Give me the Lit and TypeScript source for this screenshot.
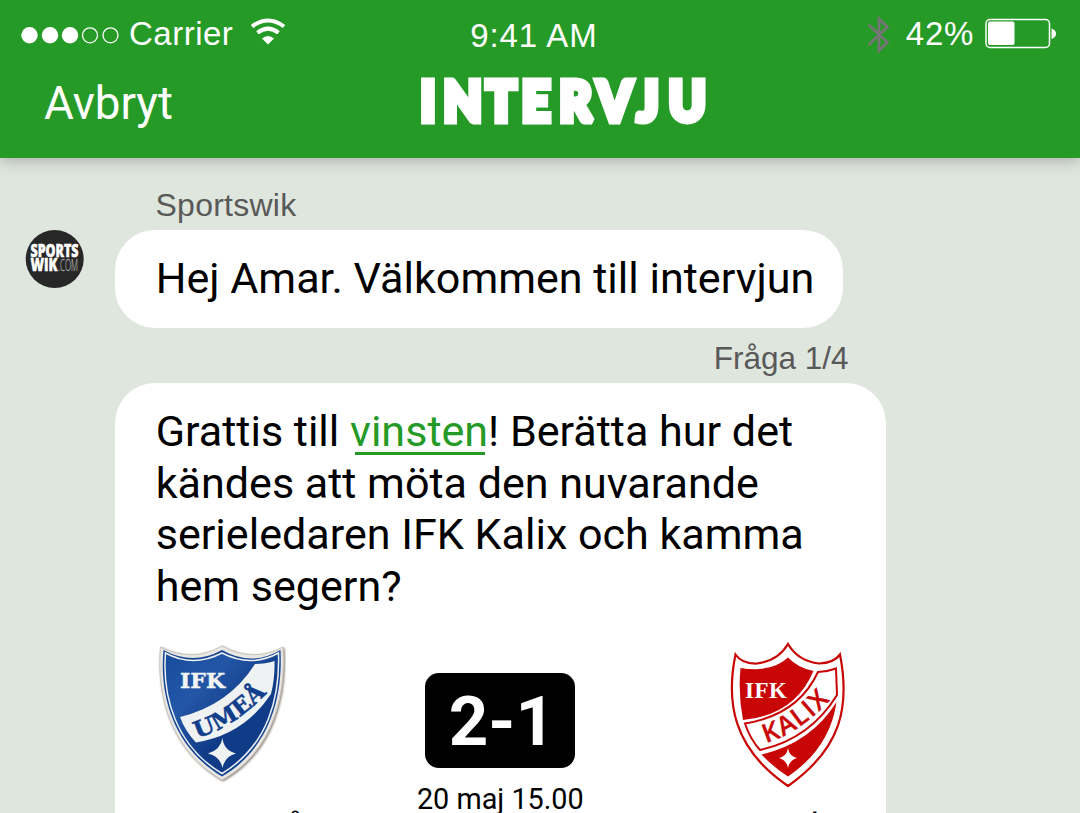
import { LitElement, html, css } from "lit";
import { customElement } from "lit/decorators.js";

@customElement("status-bar")
class StatusBar extends LitElement {
  static styles = css`
    :host { display: grid; grid-template-columns: 1fr auto 1fr; height: 68px; padding: 0 23px 0 21px; color: #fff; font: 33px/68px "Liberation Sans", Arial, sans-serif; }
    .side { display: flex; align-items: flex-start; }
    .right { justify-content: flex-end; }
    svg { display: block; flex: none; }
    .dots { margin-top: 24px; }
    .carrier { margin-left: 10px; letter-spacing: 0.5px; }
    .wifi { margin: 18px 0 0 17px; }
    .time { padding-top: 2px; letter-spacing: 0.9px; margin-right: 10px; }
    .bt { margin: 15px 15px 0 0; }
    .pct { letter-spacing: 0.7px; }
    .battery { margin: 18px 0 0 11px; }
  `;
  render() {
    return html`
      <div class="side">
        <svg class="dots" width="98" height="22" viewBox="0 0 98 22">
          <g fill="#fff"><circle cx="8.5" cy="11.3" r="8.2"/><circle cx="29" cy="11.3" r="8.2"/><circle cx="49" cy="11.3" r="8.2"/></g>
          <g fill="none" stroke="#fff" stroke-width="1.3"><circle cx="69" cy="11.3" r="7.5"/><circle cx="89.5" cy="11.3" r="7.5"/></g>
        </svg>
        <span class="carrier">Carrier</span>
        <svg class="wifi" width="36" height="27" viewBox="0 0 36 27">
          <g fill="none" stroke="#fff" stroke-width="4"><path d="M2 8.500Q18 -3.500 34 8.500"/><path d="M7.500 14.800Q18 6.500 28.500 14.800"/></g>
          <path fill="#fff" d="M12 20.500Q18 15.500 24 20.500L18 26.500Z"/>
        </svg>
      </div>
      <div class="time">9:41 AM</div>
      <div class="side right">
        <svg class="bt" width="24" height="40" viewBox="0 0 24 40"><path fill="none" stroke="#757575" stroke-width="2.800" d="M1.500 9.500L20.500 27.500L12 35.500V4L20.500 12L1.500 30"/></svg>
        <span class="pct">42%</span>
        <svg class="battery" width="72" height="31" viewBox="0 0 72 31">
          <rect x="1" y="1.500" width="63.500" height="28" rx="4" fill="none" stroke="#fff" stroke-width="1.500"/>
          <rect x="3" y="3.500" width="26.500" height="23.500" rx="2" fill="#fff"/>
          <path fill="#fff" d="M66.500 10.500Q71 12 71 15.700T66.500 21Z"/>
        </svg>
      </div>`;
  }
}

@customElement("umea-crest")
class UmeaCrest extends LitElement {
  static styles = css`
    :host, svg { display: block; }
    .shield { filter: drop-shadow(1px 1px 1px #8a8078); }
    .ifk { font: bold 20px "DejaVu Serif", serif; fill: #f3f5f5; stroke: #f3f5f5; stroke-width: .4px; }
    .town { font: bold 23px "DejaVu Serif", serif; fill: #123f8c; stroke: #123f8c; stroke-width: .5px; }
  `;
  render() {
    return html`<svg width="130" height="144" viewBox="0 0 130 144">
      <defs><linearGradient id="blue" x1="0" y1="0" x2="1" y2="1"><stop offset="0" stop-color="#174c9c"/><stop offset=".3" stop-color="#2356a6"/><stop offset=".6" stop-color="#103b86"/></linearGradient>
      <path id="curve" d="M41 96Q83 84 119 42"/></defs>
      <g transform="translate(-156 -642)">
        <path class="shield" fill="#e9e7e3" stroke="#cbc5bd" stroke-width="1" d="M160.500 647Q192 663 222 646Q253 663 283 647C286 694 274 751 222 780C172 751 156 698 160.500 647Z"/>
        <path fill="#164592" d="M163.500 650Q193 666 222 650Q252 667 280.500 650C283 695 271 748 222 776.500C174 748 159 696 163.500 650Z"/>
        <path fill="url(#blue)" stroke="#eef1f3" stroke-width="1.500" d="M165.500 653Q193 668 222 653Q251 668 278.500 653C280 696 269 745 222 773.500C176 746 162 697 165.500 653Z"/>
        <path fill="#eff2f2" d="M180 717Q229 705 255 664Q266 664 274.500 661Q275 678 271 694Q244 735 196 742.500Q185 731 180 717Z"/>
        <path fill="#eff2f2" d="M222.500 738Q223.500 750 236 753.500Q225 756 222.500 768Q220 756 208 753.500Q220.500 750 222.500 738Z"/>
        <text class="ifk" x="180" y="687.500" textLength="45" lengthAdjust="spacingAndGlyphs">IFK</text>
      </g>
      <text class="town"><textPath href="#curve" textLength="84" lengthAdjust="spacingAndGlyphs">UMEÅ</textPath></text>
    </svg>`;
  }
}

@customElement("kalix-crest")
class KalixCrest extends LitElement {
  static styles = css`
    :host, svg { display: block; }
    svg { overflow: visible; }
    .ifk { font: bold 23px "Liberation Serif", serif; fill: #fff; }
    .town { font: 600 26px "Open Sans", sans-serif; fill: #c90606; stroke: #c90606; stroke-width: .3px; }
  `;
  render() {
    return html`<svg width="118" height="146" viewBox="727 641 118 146">
      <defs><path id="curve" d="M766 742Q804 731 838 690"/></defs>
      <path fill="#fff" stroke="#c90606" stroke-width="2.200" d="M735.500 653.500Q742 663 757 662.500Q778 660 788 643Q798 660 819 662.500Q834 662 840 653.500C850 705 842 747 788 785C732 747 726 700 735.500 653.500Z"/>
      <path fill="#c90606" d="M740.500 667Q771 672 788 656.500Q798 667 813.500 670Q795 714 743 719Q738 693 740.500 667Z"/>
      <path fill="none" stroke="#c90606" stroke-width="2" d="M745 722.500Q798 714 818 671Q828 670.500 836 667.500L837 694Q810 738 760 749Q750 738 745 722.500Z"/>
      <path fill="#c90606" d="M761.500 753.500Q811 742 836.500 701C832 733 815 757 788 775.500Q773 766 761.500 753.500Z"/>
      <path fill="#fff" d="M788 747Q789 755 797 757Q789.500 759 788 767Q786.500 759 779 757Q787 755 788 747Z"/>
      <text class="ifk" x="745" y="697" textLength="42" lengthAdjust="spacing">IFK</text>
      <text class="town"><textPath href="#curve" textLength="78" lengthAdjust="spacing">KALIX</textPath></text>
    </svg>`;
  }
}

@customElement("app-root")
class AppRoot extends LitElement {
  static styles = css`
    :host { display: flex; flex-direction: column; height: 813px; overflow: hidden; background: #dfe6de; font-family: Roboto, sans-serif; color: #000; }
    header { flex: none; height: 158px; background: #269a27; box-shadow: 0 2px 14px rgba(60, 60, 60, .34); color: #fff; }
    .nav { display: grid; grid-template-columns: 374px auto; height: 90px; padding-left: 44px; }
    .cancel { font-size: 45.700px; line-height: 71px; }
    .title { display: block; margin-top: 4px; }
    .title text { font: 900 55px Lato, sans-serif; fill: #fff; stroke: #fff; stroke-width: 7px; stroke-miterlimit: 2; text-anchor: middle; }
    main { display: flex; flex-direction: column; }
    .label { font: 32px/38px "Liberation Sans", Arial, sans-serif; color: #595959; }
    .sender { padding: 28px 0 6px 155.500px; letter-spacing: 0.25px; }
    .row { display: grid; grid-template-columns: 90px 728px; padding-left: 25px; }
    .avatar { display: block; }
    .avatar text { font-family: "Open Sans", sans-serif; font-size: 17px; }
    .strong { font-weight: 800; fill: #fff; stroke: #fff; stroke-width: .5px; }
    .thin { font-weight: 300; fill: #aaa; stroke: #aaa; stroke-width: .3px; }
    .bubble { background: #fff; border-radius: 40px; font-size: 43.080px; line-height: 51.700px; white-space: nowrap; }
    .first { height: 98px; box-sizing: border-box; padding: 23px 0 0 40.700px; }
    .count { width: 848.500px; text-align: right; padding: 11px 0 6px; font-size: 31.500px; }
    .second { margin-left: 115px; width: 771px; height: 470px; box-sizing: border-box; padding: 23px 41px 0 40.700px; flex: none; }
    .second p { margin: 0; height: 208px; }
    .link { color: #269a27; background: linear-gradient(#269a27, #269a27) 5px 100% / calc(100% - 8px) 3px no-repeat; display: inline-block; line-height: 44px; height: 45px; }
    .match { display: grid; grid-template-columns: 130px 1fr 118px; margin-top: 28px; }
    .center { display: flex; flex-direction: column; align-items: center; margin-right: 12px; }
    .score { width: 150px; height: 95px; border-radius: 14px; background: #000; color: #fff; font-weight: 700; font-size: 69px; line-height: 98px; text-align: center; margin-top: 31px; box-sizing: border-box; padding-left: 3px; }
    .date { font-size: 28.800px; line-height: 34px; margin-top: 14px; }
    .team { font-size: 35px; line-height: 34px; }
    .home { margin: 25px 0 0 -2px; }
    .away { margin: 22px 0 0 -17px; }
  `;
  render() {
    return html`
      <header>
        <status-bar></status-bar>
        <div class="nav">
          <span class="cancel">Avbryt</span>
          <svg class="title" width="292" height="60" viewBox="0 0 292 60"><text transform="scale(.9 1)" x="11 49.500 92.500 131 175 218.500 255.500 299" y="49">INTERVJU</text></svg>
        </div>
      </header>
      <main>
        <div class="label sender">Sportswik</div>
        <div class="row">
          <svg class="avatar" width="60" height="60" viewBox="0 0 60 60">
            <circle cx="29.700" cy="29" r="29" fill="#282727"/>
            <text class="strong" x="5.500" y="27" textLength="48" lengthAdjust="spacingAndGlyphs">SPORTS</text>
            <text class="strong" x="5.500" y="41" textLength="27" lengthAdjust="spacingAndGlyphs">WIK</text>
            <text class="thin" x="33" y="41" textLength="20" lengthAdjust="spacingAndGlyphs">.COM</text>
          </svg>
          <div class="bubble first">Hej Amar. Välkommen till intervjun</div>
        </div>
        <div class="label count">Fråga 1/4</div>
        <div class="bubble second">
          <p>Grattis till <a class="link">vinsten</a>! Berätta hur det<br>kändes att möta den nuvarande<br>serieledaren IFK Kalix och kamma<br>hem segern?</p>
          <div class="match">
            <div><umea-crest></umea-crest><div class="team home">IFK Umeå</div></div>
            <div class="center"><div class="score">2-1</div><div class="date">20 maj 15.00</div></div>
            <div><kalix-crest></kalix-crest><div class="team away">IFK Kalix</div></div>
          </div>
        </div>
      </main>`;
  }
}
